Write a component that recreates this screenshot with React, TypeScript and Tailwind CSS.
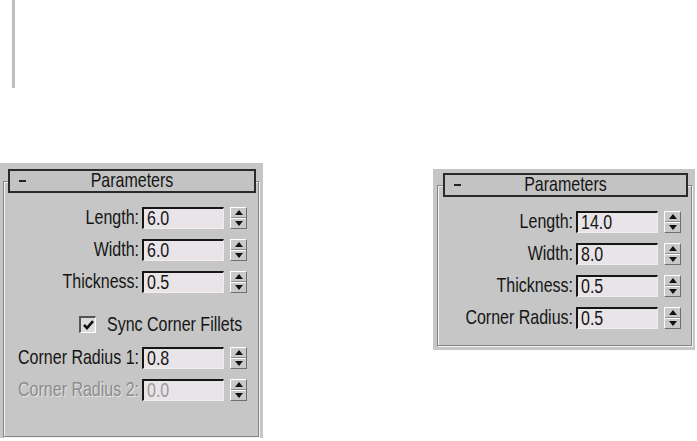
const Txt = ({ children, className = "" }: { children: React.ReactNode; className?: string }) => (
  <span className={`inline-block scale-y-[1.22] whitespace-nowrap ${className}`}>{children}</span>
);

const Spinner = () => (
  <div className="flex h-[22px] w-[17px] flex-col border border-t-white border-l-white border-r-[#6e6e6e] border-b-[#6e6e6e] bg-[#c9c9c9]">
    <div className="flex flex-1 items-center justify-center border-b border-b-[#8a8a8a]">
      <svg width="8" height="5" viewBox="0 0 8 5">
        <path d="M4 0L8 5H0Z" fill="#111" />
      </svg>
    </div>
    <div className="flex flex-1 items-center justify-center border-t border-t-white">
      <svg width="8" height="5" viewBox="0 0 8 5">
        <path d="M0 0H8L4 5Z" fill="#111" />
      </svg>
    </div>
  </div>
);

const Field = ({
  label,
  value,
  disabled = false,
  className = "",
}: {
  label: string;
  value: string;
  disabled?: boolean;
  className?: string;
}) => (
  <div className={`flex h-[22px] items-center ${className}`}>
    <div
      className={`w-[136px] pr-px text-right ${
        disabled ? "text-[#8c8c8c] [text-shadow:1px_1px_0_#e4e4e4]" : "text-[#151515]"
      }`}
    >
      <Txt>{label}</Txt>
    </div>
    <div className="ml-[2px] flex h-[22px] w-[82px] items-center border-t-2 border-l-2 border-r border-b border-t-[#161616] border-l-[#161616] border-r-[#efefef] border-b-[#efefef] bg-[#e8e4e8] pl-[3px]">
      <Txt className={disabled ? "text-[#9a9a9a]" : "text-[#151515]"}>{value}</Txt>
    </div>
    <div className="ml-[6px]">
      <Spinner />
    </div>
  </div>
);

const Title = ({ className = "" }: { className?: string }) => (
  <div
    className={`-mt-[13px] flex h-[24px] items-center border-2 border-[#2a2a2a] bg-[#c3c3c3] text-[#151515] ${className}`}
  >
    <span className="ml-[9px] block h-[2px] w-[7px] bg-[#222]" />
    <div className="-ml-[16px] flex-1 text-center">
      <Txt>Parameters</Txt>
    </div>
  </div>
);

export default function App() {
  return (
    <div className="h-[441px] w-[697px] overflow-hidden bg-white font-['Liberation_Sans',Arial,sans-serif] text-[16px] leading-none">
      <div className="ml-[12px] h-[88px] w-[3px] bg-[#bdbdbd]" />

      <div className="mt-[75px] flex items-start">
        {/* left rollout */}
        <div className="flex h-[275px] w-[263px] flex-col bg-[#c6c6c6] pt-[18px] pr-[4px] pb-[1px] pl-[3px]">
          <div className="flex-1 border border-[#858585] shadow-[inset_1px_1px_0_#f2f2f2,1px_1px_0_#f2f2f2]">
            <Title className="ml-[4px] w-[248px]" />
            <Field className="mt-[14px]" label="Length:" value="6.0" />
            <Field className="mt-[10px]" label="Width:" value="6.0" />
            <Field className="mt-[10px]" label="Thickness:" value="0.5" />
            <div className="mt-[23px] flex h-[17px] items-center pl-[75px]">
              <div className="flex h-[17px] w-[17px] items-center justify-center border-t-2 border-l-2 border-r border-b border-t-[#555] border-l-[#555] border-r-white border-b-white bg-[#dcdcdc]">
                <svg width="11" height="10" viewBox="0 0 11 10">
                  <path d="M1 4.8L4 8L10 1.2" stroke="#111" strokeWidth="2.6" fill="none" />
                </svg>
              </div>
              <div className="ml-[11px] text-[#151515]">
                <Txt>Sync Corner Fillets</Txt>
              </div>
            </div>
            <Field className="mt-[14px]" label="Corner Radius 1:" value="0.8" />
            <Field className="mt-[10px]" label="Corner Radius 2:" value="0.0" disabled />
          </div>
        </div>

        {/* right rollout */}
        <div className="ml-[170px] mt-[6px] flex h-[181px] w-[262px] flex-col bg-[#c6c6c6] pt-[16px] pr-[3px] pb-[4px] pl-[4px]">
          <div className="flex-1 border border-[#858585] shadow-[inset_1px_1px_0_#f2f2f2,1px_1px_0_#f2f2f2]">
            <Title className="ml-[5px] w-[245px]" />
            <Field className="mt-[14px]" label="Length:" value="14.0" />
            <Field className="mt-[10px]" label="Width:" value="8.0" />
            <Field className="mt-[10px]" label="Thickness:" value="0.5" />
            <Field className="mt-[10px]" label="Corner Radius:" value="0.5" />
          </div>
        </div>
      </div>
    </div>
  );
}
